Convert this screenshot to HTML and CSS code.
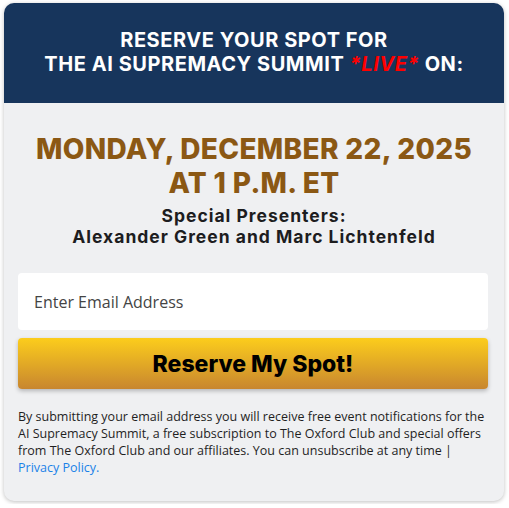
FILE: index.html
```html
<!DOCTYPE html>
<html>
<head>
<meta charset="utf-8">
<link rel="stylesheet" href="styles.css">
</head>
<body>
<div class="card">
  <div class="header">
    <h1 class="title">RESERVE YOUR SPOT FOR<br>THE AI SUPREMACY SUMMIT <em class="live">*LIVE*</em> ON:</h1>
  </div>
  <div class="content">
    <h2 class="date">MONDAY, DECEMBER 22, 2025<br>AT 1 P.M. ET</h2>
    <p class="presenters">Special Presenters:<br>Alexander Green and Marc Lichtenfeld</p>
    <form class="form">
      <input class="email" type="text" placeholder="Enter Email Address">
      <button class="btn" type="button">Reserve My Spot!</button>
    </form>
    <p class="legal">By submitting your email address you will receive free event notifications for the AI Supremacy Summit, a free subscription to The Oxford Club and special offers from The Oxford Club and our affiliates. You can unsubscribe at any time | <a class="link" href="#">Privacy Policy.</a></p>
  </div>
</div>
</body>
</html>
```
FILE: styles.css
```css
html, body { margin: 0; padding: 0; background: #ffffff; }
body { padding: 3px 4px; }
.card {
  width: 500px;
  border-radius: 10px;
  overflow: hidden;
  background: #eff0f2;
  box-shadow: 0 1px 4px rgba(0,0,0,0.25);
}
.header {
  background: #17355c;
  padding: 25px 10px 27px;
  text-align: center;
}
.title {
  margin: 0;
  font-family: Inter, "Liberation Sans", sans-serif;
  font-weight: 700;
  font-size: 20px;
  line-height: 24px;
  color: #ffffff;
  letter-spacing: 0.55px;
}
.live { color: #ff0000; font-style: italic; }
.content { padding: 29px 14px 25px; }
.date {
  margin: 0;
  text-align: center;
  font-family: Inter, "Liberation Sans", sans-serif;
  font-weight: 800;
  font-size: 28px;
  line-height: 34px;
  letter-spacing: 0.35px;
  color: #8b5814;
}
.presenters {
  margin: 5px 0 0;
  text-align: center;
  font-family: Inter, "Liberation Sans", sans-serif;
  font-weight: 700;
  font-size: 17.5px;
  line-height: 21px;
  letter-spacing: 1px;
  color: #1d1d1f;
}
.form {
  margin: 26px 2px 0 0;
  display: flex;
  flex-direction: column;
  gap: 8px;
}
.email {
  box-sizing: border-box;
  height: 57px;
  border: none;
  border-radius: 4px;
  background: #ffffff;
  padding: 0 16px;
  font-family: "Open Sans", sans-serif;
  font-size: 16px;
  outline: none;
}
.email::placeholder { color: #444444; }
.btn {
  height: 51px;
  border: none;
  border-radius: 4px;
  background: linear-gradient(#fccd1c, #c8862f);
  box-shadow: 0 2px 4px rgba(0,0,0,0.25);
  font-family: Inter, "Liberation Sans", sans-serif;
  font-weight: 800;
  font-size: 23px;
  color: #000000;
  cursor: pointer;
}
.legal {
  margin: 19px 0 0;
  font-family: "Open Sans", sans-serif;
  font-size: 12.5px;
  line-height: 17px;
  color: #1f1f1f;
}
.link { color: #1a82e8; text-decoration: none; }
```
